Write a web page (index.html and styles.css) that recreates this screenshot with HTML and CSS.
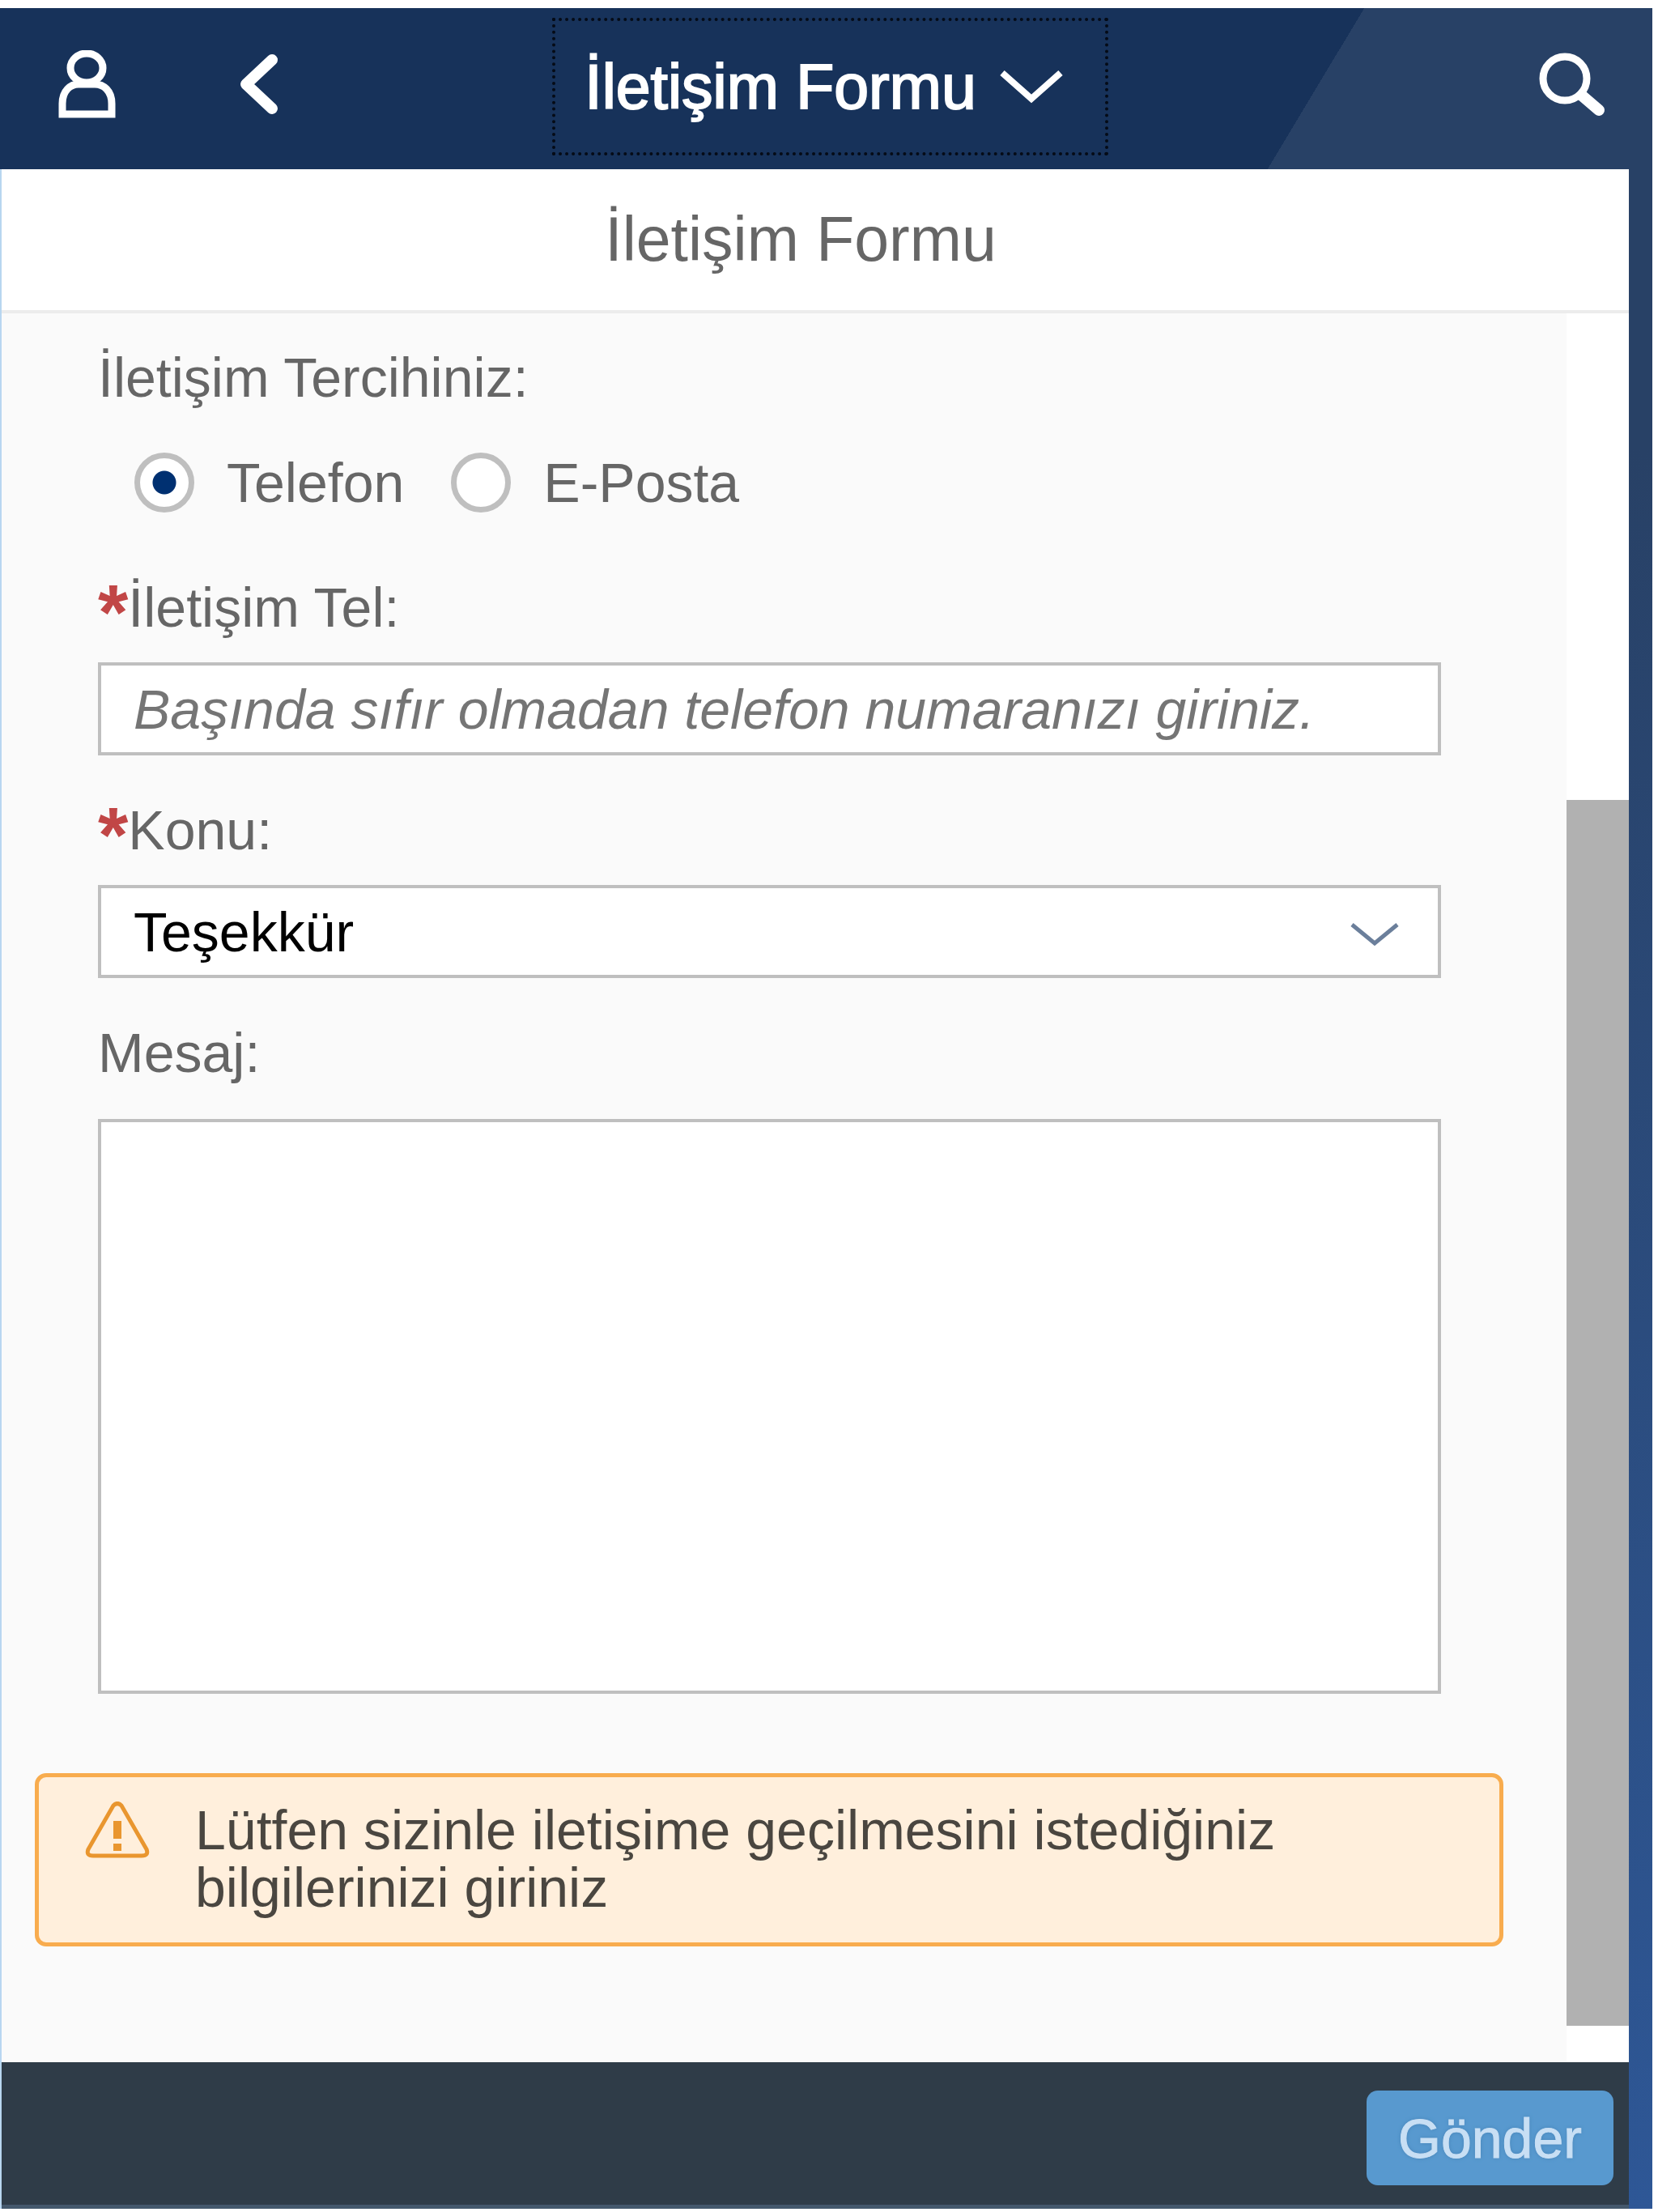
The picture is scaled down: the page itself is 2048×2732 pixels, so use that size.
FILE: index.html
```html
<!DOCTYPE html>
<html lang="tr">
<head>
  <meta charset="UTF-8" />
  <meta name="viewport" content="width=device-width, initial-scale=1" />
  <title>İletişim Formu</title>
  <link rel="stylesheet" href="styles.css">
</head>
<body>
  <div class="shell">
    <header class="shell-header">
      <div class="header-left">
        <button class="icon-button" type="button" aria-label="Kullanıcı">
          <svg viewBox="0 0 90 90" fill="none" stroke="#fff" stroke-width="9">
            <ellipse cx="44" cy="22" rx="20" ry="18" />
            <path d="M14 79V66C14 50 24 42 34 42H54C65 42 75 50 75 66V79Z" />
          </svg>
        </button>
        <button class="icon-button" type="button" aria-label="Geri">
          <svg viewBox="0 0 90 90" fill="none" stroke="#fff" stroke-width="14" stroke-linecap="round" stroke-linejoin="round">
            <path d="M62 12L30 42L62 72" />
          </svg>
        </button>
      </div>
      <button class="title-button" type="button">
        <span>İletişim Formu</span>
        <svg class="title-arrow" viewBox="0 0 80 44" fill="none" stroke="#fff" stroke-width="8">
          <path d="M4 5L40 37L76 5" />
        </svg>
      </button>
      <div class="header-right">
        <button class="icon-button" type="button" aria-label="Ara">
          <svg viewBox="0 0 90 90" fill="none" stroke="#fff">
            <circle cx="36" cy="35" r="27" stroke-width="9" />
            <path d="M57 56L78 74" stroke-width="14" stroke-linecap="round" />
          </svg>
        </button>
      </div>
    </header>

    <div class="page">
      <h1 class="page-title">İletişim Formu</h1>

      <div class="page-body">
        <main class="page-content">
          <form id="contactForm" class="contact-form">
            <fieldset class="field">
              <legend>İletişim Tercihiniz:</legend>
              <div class="radio-group">
                <label class="radio"><input type="radio" name="tercih" checked>Telefon</label>
                <label class="radio"><input type="radio" name="tercih">E-Posta</label>
              </div>
            </fieldset>

            <div class="field">
              <label for="tel"><span class="required">*</span>İletişim Tel:</label>
              <input id="tel" class="control" type="tel" placeholder="Başında sıfır olmadan telefon numaranızı giriniz.">
            </div>

            <div class="field">
              <label for="konu"><span class="required">*</span>Konu:</label>
              <div class="select-wrap">
                <select id="konu" class="control">
                  <option>Teşekkür</option>
                </select>
                <svg class="select-arrow" viewBox="0 0 60 30" fill="none" stroke="#6b7f9b" stroke-width="5">
                  <path d="M2 3L30 26L58 3" />
                </svg>
              </div>
            </div>

            <div class="field field-message">
              <label for="mesaj">Mesaj:</label>
              <textarea id="mesaj" class="control"></textarea>
            </div>
          </form>

          <div class="message-strip" role="alert">
            <svg class="warning-icon" viewBox="0 0 80 70" fill="none" stroke="#e9962f" stroke-width="5">
              <path d="M35 5Q40 0 45 5L76 59Q79 67 70 67H10Q1 67 4 59Z" />
              <path d="M40 24V46M40 52V61" stroke-width="10" />
            </svg>
            <p>Lütfen sizinle iletişime geçilmesini istediğiniz bilgilerinizi giriniz</p>
          </div>
        </main>
        <div class="scrollbar"><div class="scrollbar-thumb"></div></div>
      </div>

      <footer class="page-footer">
        <button class="submit-button" type="submit" form="contactForm">Gönder</button>
      </footer>
    </div>
  </div>
</body>
</html>
```
FILE: styles.css
```css
* {
  box-sizing: border-box;
}

body {
  margin: 0;
  background: #fff;
  color: #666;
  font-family: "Liberation Sans", Arial, sans-serif;
  font-size: 68px;
  line-height: 76px;
}

button,
input,
select,
textarea {
  font: inherit;
  color: inherit;
}

button {
  padding: 0;
  border: 0;
  background: none;
  cursor: pointer;
}

svg {
  display: block;
}

.shell {
  display: flex;
  flex-direction: column;
  min-height: calc(100vh - 14px);
  margin: 10px 7px 4px 0;
  background: linear-gradient(#284166, #284166 20%, #2e5796);
}

/* Header */

.shell-header {
  display: grid;
  grid-template-columns: 1fr auto 1fr;
  align-items: center;
  height: 199px;
  padding: 0 54px 5px 63px;
  /* slanted light panel on the right */
  background: linear-gradient(121deg, #17325a 78%, #284166 78%);
}

.header-left {
  display: flex;
  gap: 121px;
}

.header-right {
  display: flex;
  justify-content: flex-end;
}

.icon-button {
  width: 90px;
  height: 90px;
}

.title-button {
  display: flex;
  align-items: center;
  justify-content: center;
  gap: 28px;
  width: 687px;
  height: 170px;
  padding-right: 14px;
  border: 4px dotted #050b16;
  color: #fff;
  font-size: 77px;
  -webkit-text-stroke: 2px #fff;
}

.title-arrow {
  width: 80px;
  height: 44px;
}

/* Page */

.page {
  flex: 1;
  display: flex;
  flex-direction: column;
  margin-right: 29px;
  border-left: 2px solid #b8d6f0;
  background: #fff;
}

.page-title {
  margin: 0;
  padding: 48px 36px 50px 0;
  border-bottom: 4px solid #ececec;
  font-size: 77px;
  font-weight: normal;
  text-align: center;
}

.page-body {
  flex: 1;
  display: flex;
}

.page-content {
  flex: 1;
  padding: 41px 78px 140px 41px;
  background: #fafafa;
}

.scrollbar {
  display: flex;
  flex-direction: column;
  justify-content: flex-end;
  width: 77px;
  padding-bottom: 45px;
}

.scrollbar-thumb {
  height: 71.6%;
  background: #b1b1b1;
}

/* Form */

.contact-form {
  display: flex;
  flex-direction: column;
  gap: 54px;
  padding: 0 77px 0 78px;
}

.field {
  display: flex;
  flex-direction: column;
  gap: 30px;
  margin: 0;
  padding: 0;
  border: 0;
}

.field-message {
  gap: 44px;
}

fieldset.field {
  padding-bottom: 24px;
}

legend {
  padding: 0;
}

.radio-group {
  display: flex;
  gap: 58px;
  padding: 54px 0 0 45px;
}

.radio {
  display: flex;
  align-items: center;
  gap: 40px;
}

.radio input {
  appearance: none;
  width: 74px;
  height: 74px;
  margin: 0;
  border: 7px solid #bfbfbf;
  border-radius: 50%;
  background: #fff;
}

.radio input:checked {
  background: radial-gradient(circle, #003071 14px, #fff 15px);
}

.required {
  display: inline-block;
  color: #c14646;
  font-size: 96px;
  font-weight: bold;
  line-height: 0;
  vertical-align: middle;
}

.control {
  display: block;
  width: 100%;
  height: 115px;
  padding: 0 40px;
  border: 4px solid #bfbfbf;
  border-radius: 0;
  background: #fff;
}

.control::placeholder {
  color: #757575;
  font-style: italic;
  opacity: 1;
}

.select-wrap {
  position: relative;
}

select.control {
  appearance: none;
  color: #000;
}

.select-arrow {
  position: absolute;
  top: 46px;
  right: 52px;
  width: 60px;
  height: 30px;
  pointer-events: none;
}

textarea.control {
  height: 710px;
  padding: 20px 40px;
  resize: none;
}

/* Message strip */

.message-strip {
  display: flex;
  align-items: flex-start;
  gap: 56px;
  margin-top: 98px;
  padding: 30px 57px 32px;
  border: 5px solid #f8ac4e;
  border-radius: 14px;
  background: #ffefdc;
  color: #4a4640;
  line-height: 71px;
}

.warning-icon {
  flex: none;
  width: 80px;
  height: 70px;
}

.message-strip p {
  flex: 1;
  max-width: 1400px;
  margin: 0;
}

/* Footer */

.page-footer {
  display: flex;
  justify-content: flex-end;
  padding: 35px 19px 24px;
  border-bottom: 5px solid #44586c;
  background: #2f3c48;
}

.submit-button {
  width: 305px;
  height: 117px;
  border-radius: 14px;
  background: #5899cf;
  color: #c8dff4;
  -webkit-text-stroke: 1px #c8dff4;
  text-shadow: 0 0 5px #4480b4;
}
```
